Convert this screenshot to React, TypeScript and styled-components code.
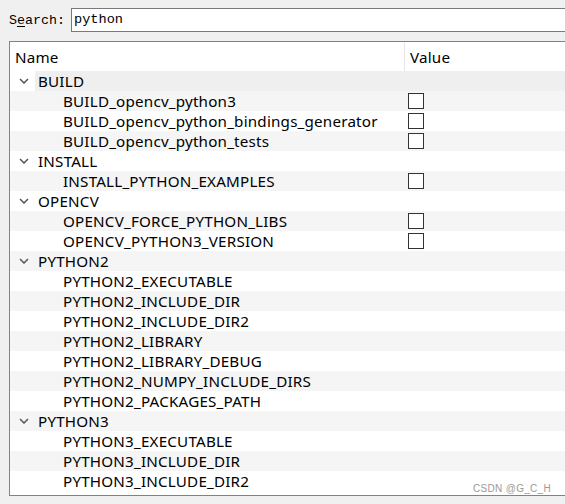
import React from "react";
import styled, { createGlobalStyle } from "styled-components";

const Global = createGlobalStyle`
  html, body { margin: 0; padding: 0; background: #f0f0f0; }
  body { width: 565px; height: 504px; overflow: hidden; }
`;

const Page = styled.div`
  position: relative;
  width: 565px;
  height: 504px;
  overflow: hidden;
  background: #f0f0f0;
  padding-top: 8px;
  box-sizing: border-box;
`;

const SearchBar = styled.div`
  display: flex;
  align-items: center;
  padding-left: 9px;
  height: 24px;
`;

const Label = styled.label`
  font-family: "Liberation Mono", "DejaVu Sans Mono", monospace;
  font-size: 13.3px;
  color: #000;
  width: 62px;
  u { text-decoration: underline; text-underline-offset: 2px; }
`;

const SearchInput = styled.div`
  flex: 1;
  height: 24px;
  box-sizing: border-box;
  border: 1px solid #7a7a7a;
  border-right: none;
  background: #fff;
  font-family: "Liberation Mono", "DejaVu Sans Mono", monospace;
  font-size: 13.6px;
  line-height: 22px;
  padding-left: 2px;
  color: #000;
`;

const Tree = styled.div`
  margin: 9px 0 0 9px;
  width: 620px;
  height: 455px;
  box-sizing: border-box;
  border: 1px solid #828282;
  background: #fff;
  font-family: "Noto Sans", "Open Sans", sans-serif;
  font-size: 15.2px;
  letter-spacing: 0.2px;
  color: #000;
  overflow: hidden;
`;

const Header = styled.div`
  display: flex;
  height: 29px;
  align-items: center;
  background: #fff;
`;

const HeaderCell = styled.div<{ $w?: number }>`
  width: ${(p) => (p.$w ? `${p.$w}px` : "auto")};
  flex: ${(p) => (p.$w ? "none" : "1")};
  height: 100%;
  display: flex;
  align-items: center;
  padding-left: 5px;
  box-sizing: border-box;
  border-right: ${(p) => (p.$w ? "1px solid #e5e5e5" : "none")};
`;

const Row = styled.div<{ $alt: boolean }>`
  display: flex;
  height: 20px;
  align-items: center;
  background: ${(p) => (p.$alt ? "#f5f5f5" : "#fff")};
`;

const Branch = styled.div`
  width: 25px;
  height: 100%;
  flex: none;
  display: flex;
  align-items: center;
  justify-content: center;
  padding-left: 2px;
  box-sizing: border-box;
`;

const Content = styled.div<{ $current?: boolean }>`
  flex: 1;
  height: 100%;
  display: flex;
  background: ${(p) => (p.$current ? "#efefef" : "transparent")};
`;

const NameCell = styled.div<{ $indent: number }>`
  width: 370px;
  flex: none;
  height: 100%;
  display: flex;
  align-items: center;
  padding-left: ${(p) => p.$indent}px;
  box-sizing: border-box;
  white-space: nowrap;
  line-height: 20px;
`;

const ValueCell = styled.div`
  flex: 1;
  height: 100%;
  display: flex;
  align-items: center;
  padding-left: 3px;
`;

const Check = styled.div`
  width: 16px;
  height: 16px;
  box-sizing: border-box;
  border: 1.5px solid #333;
  background: #fff;
  margin-top: -1px;
`;

const Watermark = styled.div`
  position: absolute;
  right: 14px;
  top: 483px;
  font-family: "Liberation Sans", Arial, sans-serif;
  font-size: 10px;
  color: #9a9a9a;
  letter-spacing: 0.3px;
`;

const Chevron = () => (
  <svg width="10" height="6" viewBox="0 0 10 6">
    <path d="M1 1 L5 5 L9 1" fill="none" stroke="#555" strokeWidth="1.5" />
  </svg>
);

type Item = { name: string; check?: boolean };
type Group = { name: string; items: Item[] };

const groups: Group[] = [
  {
    name: "BUILD",
    items: [
      { name: "BUILD_opencv_python3", check: true },
      { name: "BUILD_opencv_python_bindings_generator", check: true },
      { name: "BUILD_opencv_python_tests", check: true },
    ],
  },
  { name: "INSTALL", items: [{ name: "INSTALL_PYTHON_EXAMPLES", check: true }] },
  {
    name: "OPENCV",
    items: [
      { name: "OPENCV_FORCE_PYTHON_LIBS", check: true },
      { name: "OPENCV_PYTHON3_VERSION", check: true },
    ],
  },
  {
    name: "PYTHON2",
    items: [
      { name: "PYTHON2_EXECUTABLE" },
      { name: "PYTHON2_INCLUDE_DIR" },
      { name: "PYTHON2_INCLUDE_DIR2" },
      { name: "PYTHON2_LIBRARY" },
      { name: "PYTHON2_LIBRARY_DEBUG" },
      { name: "PYTHON2_NUMPY_INCLUDE_DIRS" },
      { name: "PYTHON2_PACKAGES_PATH" },
    ],
  },
  {
    name: "PYTHON3",
    items: [
      { name: "PYTHON3_EXECUTABLE" },
      { name: "PYTHON3_INCLUDE_DIR" },
      { name: "PYTHON3_INCLUDE_DIR2" },
    ],
  },
];

export default function App() {
  const rows: React.ReactNode[] = [];
  let i = 0;
  groups.forEach((g, gi) => {
    const idx = i++;
    rows.push(
      <Row key={`g${gi}`} $alt={idx % 2 === 1}>
        <Branch>
          <Chevron />
        </Branch>
        <Content $current={idx === 0}>
          <NameCell $indent={3}>{g.name}</NameCell>
          <ValueCell />
        </Content>
      </Row>
    );
    g.items.forEach((it, ii) => {
      const k = i++;
      rows.push(
        <Row key={`i${gi}-${ii}`} $alt={k % 2 === 1}>
          <Branch />
          <Content>
            <NameCell $indent={28}>{it.name}</NameCell>
            <ValueCell>{it.check ? <Check /> : null}</ValueCell>
          </Content>
        </Row>
      );
    });
  });

  return (
    <>
      <Global />
      <Page>
        <SearchBar>
          <Label>
            S<u>e</u>arch:
          </Label>
          <SearchInput>python</SearchInput>
        </SearchBar>
        <Tree>
          <Header>
            <HeaderCell $w={395}>Name</HeaderCell>
            <HeaderCell>Value</HeaderCell>
          </Header>
          {rows}
        </Tree>
        <Watermark>CSDN @G_C_H</Watermark>
      </Page>
    </>
  );
}
